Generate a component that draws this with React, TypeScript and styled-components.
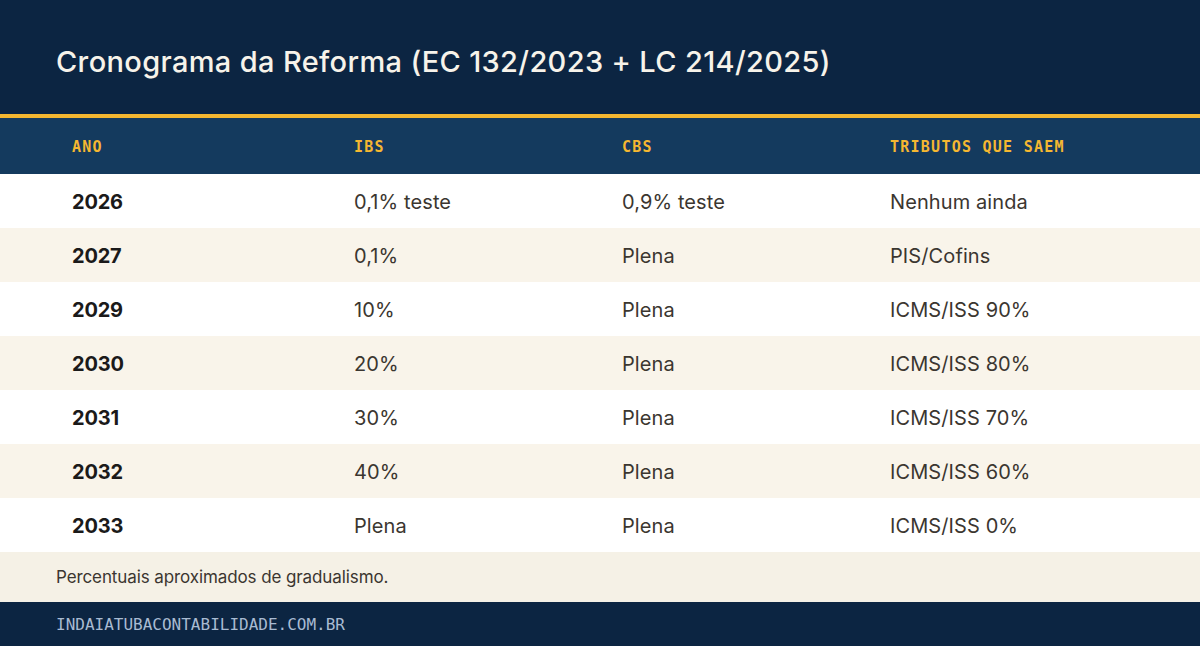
import React from "react";
import styled, { createGlobalStyle } from "styled-components";

const Global = createGlobalStyle`
  html, body { margin: 0; padding: 0; background: #ffffff; }
  body { font-family: Inter, "Noto Sans", sans-serif; }
  * { box-sizing: border-box; }
`;

const Page = styled.div`
  width: 1200px;
  height: 646px;
  display: flex;
  flex-direction: column;
  overflow: hidden;
`;

const Header = styled.header`
  height: 118px;
  background: #0c2542;
  border-bottom: 4px solid #f5b731;
  display: flex;
  align-items: center;
  padding: 8px 56px 0;
`;

const Title = styled.h1`
  margin: 0;
  font-family: Inter, sans-serif;
  font-weight: 500;
  font-size: 29px;
  letter-spacing: 0.35px;
  color: #f7f3ea;
`;

const Row = styled.div<{ $bg: string; $h: number }>`
  height: ${(p) => p.$h}px;
  background: ${(p) => p.$bg};
  display: grid;
  grid-template-columns: 282px 268px 268px 1fr;
  align-items: center;
  padding: 0 56px;
`;

const HeadCell = styled.div`
  padding-left: 16px;
  padding-top: 2px;
  font-family: "DejaVu Sans Mono", "Liberation Mono", monospace;
  font-weight: 700;
  font-size: 15px;
  letter-spacing: 1.25px;
  color: #f5b731;
`;

const Cell = styled.div<{ $year?: boolean }>`
  padding-left: 16px;
  padding-top: 2px;
  font-family: Inter, sans-serif;
  font-size: 20px;
  font-weight: ${(p) => (p.$year ? 700 : 400)};
  color: ${(p) => (p.$year ? "#1b1a1a" : "#3b3630")};
  letter-spacing: ${(p) => (p.$year ? "-0.2px" : "0.1px")};
`;

const Note = styled.div`
  height: 50px;
  background: #f5f1e6;
  display: flex;
  align-items: center;
  padding: 0 56px;
  font-family: Inter, sans-serif;
  font-size: 17px;
  color: #3b3630;
  letter-spacing: -0.1px;
`;

const Footer = styled.footer`
  flex: 1;
  background: #0c2542;
  display: flex;
  align-items: center;
  padding: 0 56px;
  font-family: "DejaVu Sans Mono", monospace;
  font-size: 16px;
  letter-spacing: 0;
  color: #a9bbd2;
`;

const rows = [
  ["2026", "0,1% teste", "0,9% teste", "Nenhum ainda"],
  ["2027", "0,1%", "Plena", "PIS/Cofins"],
  ["2029", "10%", "Plena", "ICMS/ISS 90%"],
  ["2030", "20%", "Plena", "ICMS/ISS 80%"],
  ["2031", "30%", "Plena", "ICMS/ISS 70%"],
  ["2032", "40%", "Plena", "ICMS/ISS 60%"],
  ["2033", "Plena", "Plena", "ICMS/ISS 0%"],
];

export default function App() {
  return (
    <Page>
      <Global />
      <Header>
        <Title>Cronograma da Reforma (EC 132/2023 + LC 214/2025)</Title>
      </Header>
      <Row $bg="#143a5e" $h={56}>
        <HeadCell>ANO</HeadCell>
        <HeadCell>IBS</HeadCell>
        <HeadCell>CBS</HeadCell>
        <HeadCell>TRIBUTOS QUE SAEM</HeadCell>
      </Row>
      {rows.map((r, i) => (
        <Row key={r[0]} $bg={i % 2 === 0 ? "#ffffff" : "#f9f4ea"} $h={54}>
          <Cell $year>{r[0]}</Cell>
          <Cell>{r[1]}</Cell>
          <Cell>{r[2]}</Cell>
          <Cell>{r[3]}</Cell>
        </Row>
      ))}
      <Note>Percentuais aproximados de gradualismo.</Note>
      <Footer>INDAIATUBACONTABILIDADE.COM.BR</Footer>
    </Page>
  );
}
